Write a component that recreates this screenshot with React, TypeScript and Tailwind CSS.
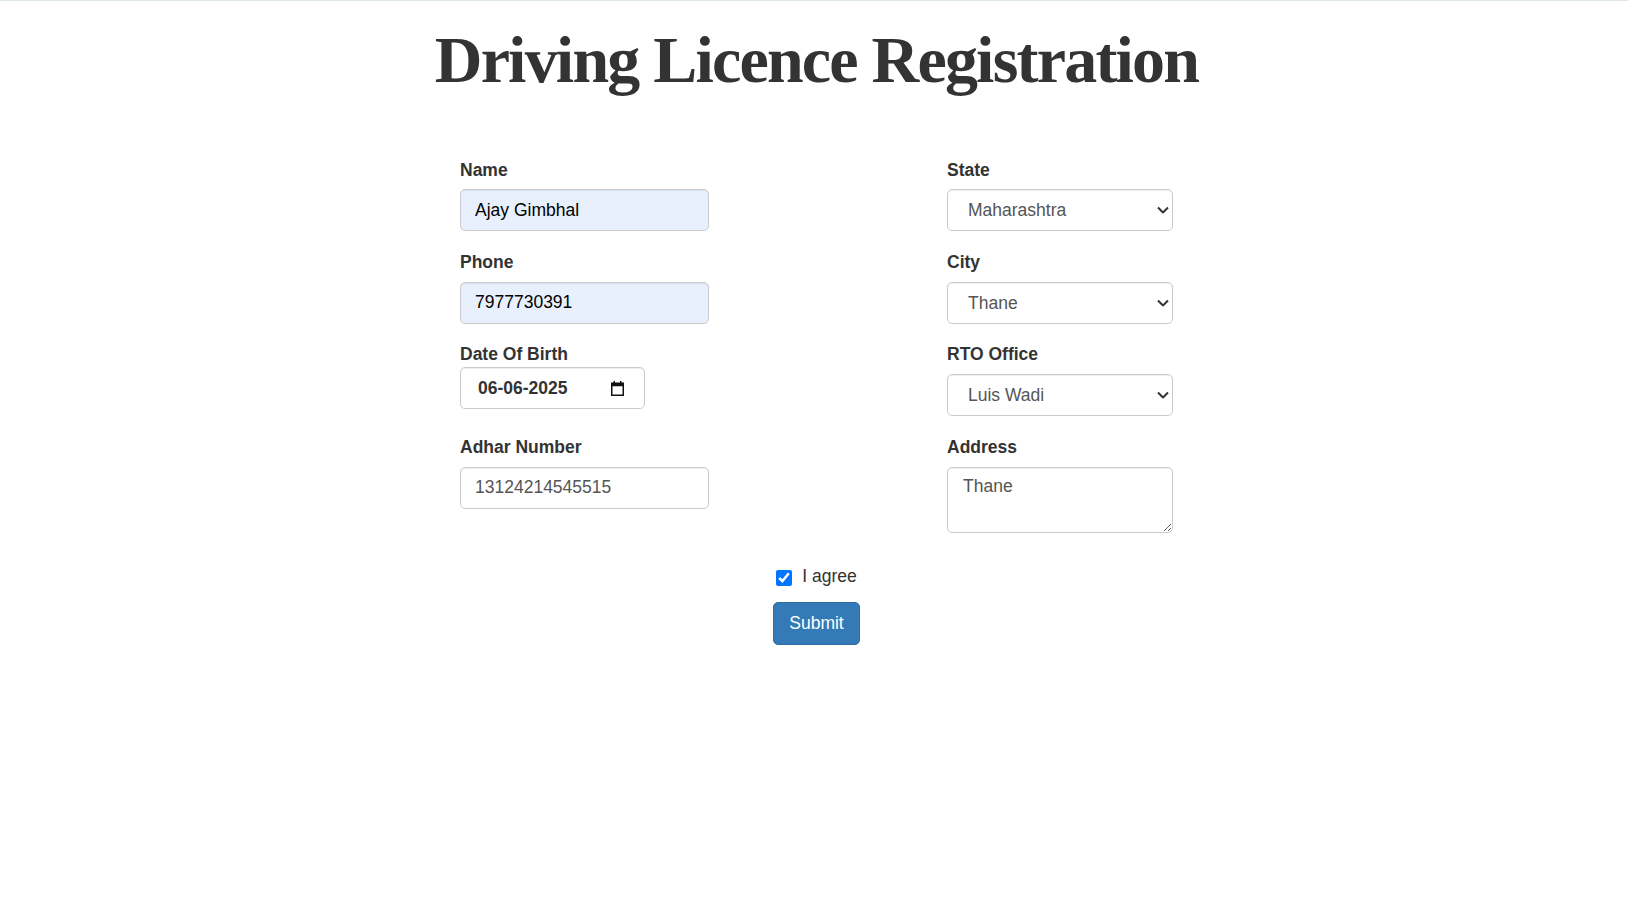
import React, { useState } from 'react'

const labelCls = 'block h-[25px] leading-[25px] text-[17.5px] font-bold text-[#333]'
const boxCls =
	'h-[42px] rounded-[5px] border border-[#ccc] shadow-[inset_0_1px_1px_rgba(0,0,0,0.075)] text-[17.5px] outline-none'

function Chevron() {
	return (
		<svg
			width="12"
			height="7"
			viewBox="0 0 12 7"
			className="pointer-events-none absolute right-[4px] top-1/2 -translate-y-1/2"
		>
			<polyline points="1,1 6,6 11,1" fill="none" stroke="#333" strokeWidth="2" />
		</svg>
	)
}

function CalendarIcon() {
	return (
		<svg width="13" height="15" viewBox="0 0 13 15" className="absolute right-[20px] top-[13px]">
			<rect x="0.75" y="2.25" width="11.5" height="12" fill="none" stroke="#111" strokeWidth="1.5" />
			<rect x="0.75" y="2.25" width="11.5" height="3" fill="#111" />
			<rect x="2.5" y="0" width="1.5" height="3" fill="#111" />
			<rect x="9" y="0" width="1.5" height="3" fill="#111" />
		</svg>
	)
}

type SelectProps = {
	label: string
	value: string
	options: string[]
	className?: string
	labelClass?: string
	onChange: (v: string) => void
}

function SelectField({ label, value, options, className, labelClass, onChange }: SelectProps) {
	return (
		<div className={className}>
			<label className={`${labelCls} ${labelClass ?? 'mb-[6.5px]'}`}>{label}</label>
			<div className="relative">
				<select
					value={value}
					onChange={(e) => onChange(e.target.value)}
					className={`${boxCls} w-full appearance-none bg-white pl-[20px] pr-[24px] text-[#555]`}
				>
					{options.map((o) => (
						<option key={o}>{o}</option>
					))}
				</select>
				<Chevron />
			</div>
		</div>
	)
}

export default function App() {
	const [form, setForm] = useState({
		name: 'Ajay Gimbhal',
		phone: '7977730391',
		adhar: '13124214545515',
		state: 'Maharashtra',
		city: 'Thane',
		rto: 'Luis Wadi',
		address: 'Thane',
		agree: true
	})

	const set = (key: string, value: string | boolean) => setForm({ ...form, [key]: value })

	return (
		<div
			className="min-h-screen bg-white border-t border-[#dfe8e8] pl-[5px] text-[#333]"
			style={{ fontFamily: '"Liberation Sans", Arial, sans-serif' }}
		>
			<h1
				className="mt-[22.7px] h-[72px] text-center text-[66px] leading-[72px] font-bold tracking-[-1.8px] text-[#333]"
				style={{ fontFamily: '"Liberation Serif", "Times New Roman", serif' }}
			>
				Driving Licence Registration
			</h1>

			<form className="mx-auto mt-[62px] w-[713px]" onSubmit={(e) => e.preventDefault()}>
				<div className="grid grid-cols-[487px_226px] items-start">
					<div className="flex flex-col">
						<div className="w-[249px]">
							<label className={`${labelCls} mb-[6.5px]`}>Name</label>
							<input
								value={form.name}
								onChange={(e) => set('name', e.target.value)}
								className={`${boxCls} w-full bg-[#e8f0fe] pl-[14px] text-black`}
							/>
						</div>
						<div className="mt-[19px] w-[249px]">
							<label className={`${labelCls} mb-[6.5px]`}>Phone</label>
							<input
								value={form.phone}
								onChange={(e) => set('phone', e.target.value)}
								className={`${boxCls} w-full bg-[#e8f0fe] pl-[14px] text-black`}
							/>
						</div>
						<div className="mt-[18.5px]">
							<label className={`${labelCls} mb-0`}>Date Of Birth</label>
							<div className={`${boxCls} relative flex w-[185px] items-center bg-white pl-[17px] font-bold text-[#333]`}>
								06-06-2025
								<CalendarIcon />
							</div>
						</div>
						<div className="mt-[25.9px] w-[249px]">
							<label className={`${labelCls} mb-[6.5px]`}>Adhar Number</label>
							<input
								value={form.adhar}
								onChange={(e) => set('adhar', e.target.value)}
								className={`${boxCls} w-full bg-white pl-[14px] text-[#555]`}
							/>
						</div>
					</div>

					<div className="flex flex-col">
						<SelectField
							label="State"
							value={form.state}
							options={['Maharashtra', 'Gujarat', 'Karnataka']}
							onChange={(v) => set('state', v)}
						/>
						<SelectField
							label="City"
							value={form.city}
							options={['Thane', 'Mumbai', 'Pune']}
							className="mt-[19px]"
							onChange={(v) => set('city', v)}
						/>
						<SelectField
							label="RTO Office"
							value={form.rto}
							options={['Luis Wadi', 'Kalyan', 'Vashi']}
							className="mt-[18.5px]"
							labelClass="mb-[7px]"
							onChange={(v) => set('rto', v)}
						/>
						<div className="mt-[19px]">
							<label className={`${labelCls} mb-[6.5px]`}>Address</label>
							<textarea
								value={form.address}
								onChange={(e) => set('address', e.target.value)}
								className="block h-[66px] w-full rounded-[5px] border border-[#ccc] bg-white pl-[15px] pt-[6px] text-[17.5px] leading-[25px] text-[#555] shadow-[inset_0_1px_1px_rgba(0,0,0,0.075)] outline-none"
							/>
						</div>
					</div>
				</div>
			</form>

			<div className="mt-[31.4px] flex h-[25px] items-center justify-center gap-[10px]">
				<input
					type="checkbox"
					checked={form.agree}
					onChange={(e) => set('agree', e.target.checked)}
					className="m-0 mt-[3px] h-[16px] w-[16px] accent-[#0075ff]"
				/>
				<span className="text-[17.5px] leading-[25px] text-[#333]">I agree</span>
			</div>

			<div className="mt-[13px] flex justify-center">
				<button
					type="submit"
					className="h-[42.5px] rounded-[5px] border border-[#2e6da4] bg-[#337ab7] px-[15px] text-[17.5px] text-white"
				>
					Submit
				</button>
			</div>
		</div>
	)
}
